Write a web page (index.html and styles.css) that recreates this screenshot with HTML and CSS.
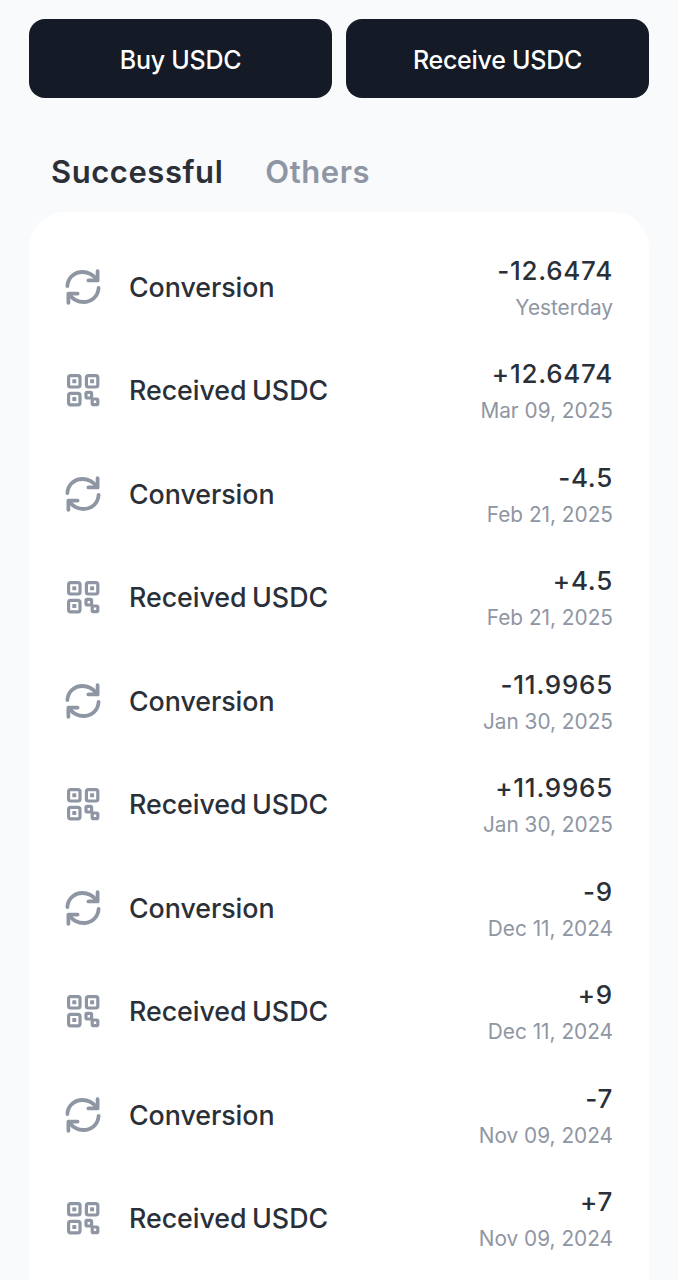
FILE: index.html
```html
<!DOCTYPE html>
<html lang="en">
<head>
<meta charset="utf-8">
<title>USDC</title>
<link rel="stylesheet" href="styles.css">
</head>
<body>
<svg class="defs" width="0" height="0" aria-hidden="true">
  <defs>
    <symbol id="i-conv" viewBox="0 0 36 36">
      <g fill="none" stroke="currentColor" stroke-width="3.8" stroke-linecap="round" stroke-linejoin="round">
        <path d="M2.4 17.2C2.8 8.8 9.4 3 17.6 3c5 0 9.8 2.2 13.8 7"/>
        <path d="M32.6 2.2v9.2h-9.2"/>
        <path d="M33.6 18.8C33.2 27.2 26.6 33 18.4 33c-5 0-9.8-2.2-13.8-7"/>
        <path d="M3.4 33.8v-9.2h9.2"/>
      </g>
    </symbol>
    <symbol id="i-qr" viewBox="-2 -2 36 36">
      <g fill="none" stroke="currentColor" stroke-width="3.2" stroke-linejoin="round">
        <rect x="1.6" y="1.6" width="11.4" height="11.4" rx="2"/>
        <rect x="19.4" y="1.6" width="11.4" height="11.4" rx="2"/>
        <rect x="1.6" y="19.4" width="11.4" height="11.4" rx="2"/>
        <rect x="19" y="18.4" width="5.6" height="5.6" rx="1.2"/>
        <rect x="25.2" y="25" width="5.6" height="5.6" rx="1.2"/>
      </g>
      <g fill="currentColor">
        <rect x="5.3" y="5.3" width="4" height="4" rx=".6"/>
        <rect x="23.1" y="5.3" width="4" height="4" rx=".6"/>
        <rect x="5.3" y="23.1" width="4" height="4" rx=".6"/>
      </g>
    </symbol>
  </defs>
</svg>
<main class="page">
  <div class="actions">
    <button class="btn">Buy USDC</button>
    <button class="btn">Receive USDC</button>
  </div>
  <div class="tabs">
    <span class="tab tab-active">Successful</span>
    <span class="tab">Others</span>
  </div>
  <section class="card">
    <div class="row"><svg class="icon"><use href="#i-conv"/></svg><span class="label">Conversion</span><div class="meta"><div class="amount">-12.6474</div><div class="date">Yesterday</div></div></div>
    <div class="row"><svg class="icon"><use href="#i-qr"/></svg><span class="label">Received USDC</span><div class="meta"><div class="amount">+12.6474</div><div class="date">Mar 09, 2025</div></div></div>
    <div class="row"><svg class="icon"><use href="#i-conv"/></svg><span class="label">Conversion</span><div class="meta"><div class="amount">-4.5</div><div class="date">Feb 21, 2025</div></div></div>
    <div class="row"><svg class="icon"><use href="#i-qr"/></svg><span class="label">Received USDC</span><div class="meta"><div class="amount">+4.5</div><div class="date">Feb 21, 2025</div></div></div>
    <div class="row"><svg class="icon"><use href="#i-conv"/></svg><span class="label">Conversion</span><div class="meta"><div class="amount">-11.9965</div><div class="date">Jan 30, 2025</div></div></div>
    <div class="row"><svg class="icon"><use href="#i-qr"/></svg><span class="label">Received USDC</span><div class="meta"><div class="amount">+11.9965</div><div class="date">Jan 30, 2025</div></div></div>
    <div class="row"><svg class="icon"><use href="#i-conv"/></svg><span class="label">Conversion</span><div class="meta"><div class="amount">-9</div><div class="date">Dec 11, 2024</div></div></div>
    <div class="row"><svg class="icon"><use href="#i-qr"/></svg><span class="label">Received USDC</span><div class="meta"><div class="amount">+9</div><div class="date">Dec 11, 2024</div></div></div>
    <div class="row"><svg class="icon"><use href="#i-conv"/></svg><span class="label">Conversion</span><div class="meta"><div class="amount">-7</div><div class="date">Nov 09, 2024</div></div></div>
    <div class="row"><svg class="icon"><use href="#i-qr"/></svg><span class="label">Received USDC</span><div class="meta"><div class="amount">+7</div><div class="date">Nov 09, 2024</div></div></div>
  </section>
</main>
</body>
</html>
```
FILE: styles.css
```css
* { box-sizing: border-box; }
html, body { margin: 0; height: 100%; overflow: hidden; }
body { background: #f8fafc; font-family: Inter, "Noto Sans", sans-serif; color: #2b3038; }
.defs { position: absolute; }
.page { display: flex; flex-direction: column; height: 100vh; padding: 19px 29px 0 29px; }
.actions { display: grid; grid-template-columns: 303px 303px; gap: 14px; }
.btn { height: 79px; border: 0; border-radius: 16px; background: #141b27; color: #fff; font: 500 25px/1 Inter, sans-serif; letter-spacing: -0.25px; padding-top: 4px; }
.tabs { display: flex; gap: 42px; padding: 55px 0 0 22px; height: 114px; flex: none; }
.tab { font-size: 31px; line-height: 38px; font-weight: 600; color: #8f96a3; letter-spacing: 0.55px; }
.tab-active { color: #2b3038; }
.card { flex: 1; background: #fff; border-radius: 36px 36px 0 0; width: 620px; padding: 23px 36px 0 36px; }
.row { display: flex; align-items: center; height: 103.5px; }
.icon { width: 36px; height: 36px; color: #8f96a3; flex: none; }
.label { margin-left: 28px; font-size: 26.8px; font-weight: 450; word-spacing: -1.5px; letter-spacing: -0.05px; flex: 1; }
.meta { text-align: right; padding-top: 5px; }
.amount { font-size: 26px; line-height: 36px; font-weight: 450; letter-spacing: 0.75px; }
.date { font-size: 20.8px; line-height: 37px; color: #8f96a3; }
```
